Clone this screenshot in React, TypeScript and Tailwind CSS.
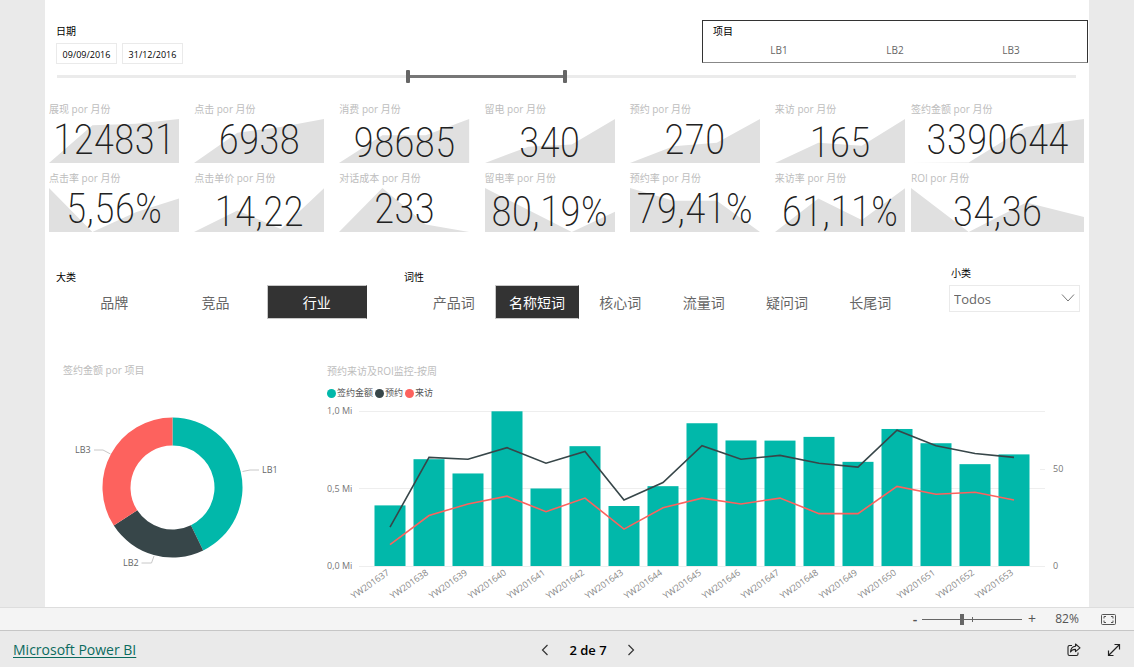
import { useState } from 'react';
import { clsx } from 'clsx';

type Kpi = {
  title: string;
  value: string;
  trend: number[];
  low?: boolean;
};

// trend values go from 0 (bottom) to 1 (top)
const kpiRows: Kpi[][] = [
  [
    { title: '展现 por 月份', value: '124831', trend: [0, 0.86, 0.89, 1] },
    { title: '点击 por 月份', value: '6938', trend: [0, 0.69, 0.82, 1] },
    { title: '消费 por 月份', value: '98685', trend: [0, 0.63, 0.63, 1], low: true },
    { title: '留电 por 月份', value: '340', trend: [0, 0.37, 0.42, 1], low: true },
    { title: '预约 por 月份', value: '270', trend: [0, 0.38, 0.46, 1] },
    { title: '来访 por 月份', value: '165', trend: [0, 0.46, 0.39, 1], low: true },
    { title: '签约金额 por 月份', value: '3390644', trend: [0, 0.01, 0.82, 1] },
  ],
  [
    { title: '点击率 por 月份', value: '5,56%', trend: [1, 0, 0.45, 0.76] },
    { title: '点击单价 por 月份', value: '14,22', trend: [0, 0.49, 0.07, 1], low: true },
    { title: '对话成本 por 月份', value: '233', trend: [0, 1, 0.17, 0] },
    { title: '留电率 por 月份', value: '80,19%', trend: [1, 0.5, 0, 0.46], low: true },
    { title: '预约率 por 月份', value: '79,41%', trend: [1, 0.71, 0.71, 0] },
    { title: '来访率 por 月份', value: '61,11%', trend: [0, 0.76, 0.27, 1], low: true },
    { title: 'ROI por 月份', value: '34,36', trend: [1, 0, 0.67, 0.34], low: true },
  ],
];

const projects = ['LB1', 'LB2', 'LB3'];
const categories = ['品牌', '竞品', '行业'];
const wordTypes = ['产品词', '名称短词', '核心词', '流量词', '疑问词', '长尾词'];

const weeks = [
  { week: 'YW201637', amount: 0.391, booked: 20, visits: 11 },
  { week: 'YW201638', amount: 0.689, booked: 56, visits: 26 },
  { week: 'YW201639', amount: 0.597, booked: 55, visits: 32 },
  { week: 'YW201640', amount: 0.998, booked: 61, visits: 36 },
  { week: 'YW201641', amount: 0.5, booked: 53, visits: 28 },
  { week: 'YW201642', amount: 0.773, booked: 59, visits: 35 },
  { week: 'YW201643', amount: 0.387, booked: 34, visits: 19 },
  { week: 'YW201644', amount: 0.515, booked: 43, visits: 30 },
  { week: 'YW201645', amount: 0.921, booked: 62, visits: 35 },
  { week: 'YW201646', amount: 0.81, booked: 55, visits: 32 },
  { week: 'YW201647', amount: 0.809, booked: 57, visits: 35 },
  { week: 'YW201648', amount: 0.833, booked: 53, visits: 27 },
  { week: 'YW201649', amount: 0.672, booked: 51, visits: 27 },
  { week: 'YW201650', amount: 0.884, booked: 70, visits: 41 },
  { week: 'YW201651', amount: 0.792, booked: 62, visits: 37 },
  { week: 'YW201652', amount: 0.657, booked: 58, visits: 38 },
  { week: 'YW201653', amount: 0.72, booked: 56, visits: 34 },
];

const KpiCard = ({ kpi }: { kpi: Kpi }) => {
  const line = kpi.trend.map((v, i) => `${i * 10},${44 - v * 44}`).join(' ');
  return (
    <div>
      <h3 className="text-[10px] leading-4 text-[#bdbdbd] whitespace-nowrap">{kpi.title}</h3>
      <div className="relative mt-[2px] h-11">
        <svg className="absolute inset-0 w-full h-full" viewBox="0 0 30 44" preserveAspectRatio="none">
          <polygon points={`0,44 ${line} 30,44`} fill="#e0e0e0" />
        </svg>
        <p
          className={clsx(
            "relative text-center font-extralight text-[42px] leading-[41px] text-[#212121] font-['Roboto_Condensed','Open_Sans_Condensed',Roboto,sans-serif]",
            kpi.low && 'pt-[3px]'
          )}
        >
          {kpi.value}
        </p>
      </div>
    </div>
  );
};

const thumb =
  'appearance-none bg-transparent [&::-webkit-slider-thumb]:appearance-none [&::-webkit-slider-thumb]:w-1 [&::-webkit-slider-thumb]:bg-[#666666]';

const DateSlicer = () => {
  const [from, setFrom] = useState(344);
  const [to, setTo] = useState(499);
  const range =
    'absolute inset-0 w-full h-[13px] pointer-events-none [&::-webkit-slider-thumb]:h-[13px] [&::-webkit-slider-thumb]:rounded-[1px] [&::-webkit-slider-thumb]:pointer-events-auto';
  return (
    <div className="relative h-[13px] mt-[6px] ml-3 mr-[13px] flex items-center">
      <div className="w-full h-[3px] bg-[#ebebeb]"></div>
      <div
        className="absolute h-[3px] bg-[#777777]"
        style={{ left: `${from / 10}%`, width: `${(to - from) / 10}%` }}
      ></div>
      <input
        type="range"
        aria-label="Data inicial"
        min={0}
        max={1000}
        value={from}
        onChange={(e) => setFrom(Number(e.target.value))}
        className={clsx(thumb, range)}
      />
      <input
        type="range"
        aria-label="Data final"
        min={0}
        max={1000}
        value={to}
        onChange={(e) => setTo(Number(e.target.value))}
        className={clsx(thumb, range)}
      />
    </div>
  );
};

type ChoiceProps = {
  items: string[];
  selected: string;
  onSelect: (item: string) => void;
  className: string;
};

const Choices = ({ items, selected, onSelect, className }: ChoiceProps) => (
  <div className={clsx('grid ml-2', className)}>
    {items.map((item) => (
      <button
        key={item}
        type="button"
        aria-pressed={item === selected}
        onClick={() => onSelect(item)}
        className={clsx(
          'h-[34px] pt-[2px] text-sm whitespace-nowrap border',
          item === selected
            ? 'bg-[#333333] border-[#c8c8c8] border-r-[#333333] text-white'
            : 'border-transparent text-[#666666]'
        )}
      >
        {item}
      </button>
    ))}
  </div>
);

const polar = (radius: number, deg: number) => {
  const rad = (deg * Math.PI) / 180;
  return `${(109.5 + radius * Math.sin(rad)).toFixed(2)} ${(109.5 - radius * Math.cos(rad)).toFixed(2)}`;
};

const slices = [
  { name: 'LB1', start: 0, end: 154, color: '#01b8aa' },
  { name: 'LB2', start: 154, end: 237, color: '#374649' },
  { name: 'LB3', start: 237, end: 360, color: '#fd625e' },
];

const DonutChart = () => (
  <svg className="w-[240px] h-[220px]" viewBox="0 0 240 220">
    {slices.map((s) => (
      <path
        key={s.name}
        d={`M${polar(70, s.start)} A70 70 0 0 1 ${polar(70, s.end)} L${polar(42, s.end)} A42 42 0 0 0 ${polar(42, s.start)}Z`}
        fill={s.color}
      />
    ))}
    <g fill="none" stroke="#c8c8c8">
      <path d="M179.500 93.500L187 92H196" />
      <path d="M31 72H40L47.500 76" />
      <path d="M78.500 185H88.500L91 178" />
    </g>
    <g className="text-[9px]" fill="#666666">
      <text x="199" y="95">LB1</text>
      <text x="12" y="75">LB3</text>
      <text x="60" y="188">LB2</text>
    </g>
  </svg>
);

const ComboChart = () => {
  const base = 163;
  const center = (i: number) => 63 + i * 39;
  const points = (key: 'booked' | 'visits') =>
    weeks.map((w, i) => `${center(i)},${base - w[key] * 1.94}`).join(' ');
  return (
    <svg className="w-full h-auto" viewBox="0 0 753 202">
      <path d="M32 8.500H718M32 85.500H718M32 163.500H718M713 66.500H718" stroke="#eeeeee" fill="none" />
      {weeks.map((w, i) => (
        <rect
          key={w.week}
          x={center(i) - 15.5}
          y={base - w.amount * 155}
          width="31"
          height={w.amount * 155}
          fill="#01b8aa"
        />
      ))}
      <polyline points={points('booked')} fill="none" stroke="#374649" strokeWidth="1.6" />
      <polyline points={points('visits')} fill="none" stroke="#fd625e" strokeWidth="1.6" />
      <g className="text-[9px]" fill="#777777">
        <text x="0" y="11">1,0 Mi</text>
        <text x="0" y="89">0,5 Mi</text>
        <text x="0" y="166">0,0 Mi</text>
        <text x="726" y="69">50</text>
        <text x="726" y="166">0</text>
      </g>
      <g className="text-[9px]" fill="#888888" textAnchor="end">
        {weeks.map((w, i) => (
          <text key={w.week} transform={`translate(${center(i)} 171) rotate(-35)`}>
            {w.week}
          </text>
        ))}
      </g>
    </svg>
  );
};

const legend = [
  { label: '签约金额', dot: 'bg-[#01b8aa]' },
  { label: '预约', dot: 'bg-[#374649]' },
  { label: '来访', dot: 'bg-[#fd625e]' },
];

const Report = () => {
  const [project, setProject] = useState('');
  const [category, setCategory] = useState('行业');
  const [wordType, setWordType] = useState('名称短词');

  return (
    <main className="flex-1 mx-[45px] pt-5 bg-white">
      <div className="flex justify-between items-start pl-[11px] pr-px">
        <div className="pt-[3px]">
          <p className="text-[10px] leading-4 text-black">日期</p>
          <div className="flex gap-[5px] mt-1">
            {['09/09/2016', '31/12/2016'].map((date) => (
              <input
                key={date}
                type="text"
                aria-label="日期"
                defaultValue={date}
                className="w-[61px] h-[21px] px-1 pt-px text-[9px] text-center text-black border border-[#eaeaea]"
              />
            ))}
          </div>
        </div>
        <div className="w-[386px] h-[43px] pt-[2px] px-[10px] border border-[#333333] border-b-[#888888]">
          <p className="text-[10px] leading-4 text-black">项目</p>
          <div className="grid grid-cols-3 px-2">
            {projects.map((p) => (
              <button
                key={p}
                type="button"
                onClick={() => setProject(p)}
                className={clsx('h-[22px] text-[10px] leading-5 text-[#666666]', p === project && 'font-bold')}
              >
                {p}
              </button>
            ))}
          </div>
        </div>
      </div>

      <DateSlicer />

      <div className="mt-[18px] pl-1 pr-[5px] space-y-[7px]">
        {kpiRows.map((row) => (
          <div key={row[0].title} className="flex gap-[6px]">
            <div className="flex-1 grid grid-cols-6 gap-[15px]">
              {row.slice(0, 6).map((kpi) => (
                <KpiCard key={kpi.title} kpi={kpi} />
              ))}
            </div>
            <div className="w-[173px]">
              <KpiCard kpi={row[6]} />
            </div>
          </div>
        ))}
      </div>

      <div className="mt-[33px] pl-[11px] pr-[9px] grid grid-cols-[311fr_508fr_131fr] gap-[37px]">
        <div className="pt-1">
          <p className="text-[10px] leading-4 text-black">大类</p>
          <Choices items={categories} selected={category} onSelect={setCategory} className="grid-cols-3 gap-px" />
        </div>
        <div className="pt-1">
          <p className="text-[10px] leading-4 text-black">词性</p>
          <Choices items={wordTypes} selected={wordType} onSelect={setWordType} className="grid-cols-6" />
        </div>
        <div>
          <label htmlFor="subcategory" className="block mb-1 pl-[2px] text-[10px] leading-4 text-black">
            小类
          </label>
          <div className="relative">
            <select
              id="subcategory"
              className="w-full h-[27px] pl-1 pt-[2px] appearance-none text-[13px] text-[#666666] border border-[#eaeaea] bg-white"
            >
              <option>Todos</option>
            </select>
            <svg
              className="absolute right-1 top-2 w-4 h-[10px] pointer-events-none"
              viewBox="0 0 16 10"
              fill="none"
              stroke="#777777"
            >
              <path d="M2 1.500L8 8L14 1.500" />
            </svg>
          </div>
        </div>
      </div>

      <div className="mt-[43px] pl-[18px] pr-[9px] flex">
        <section className="w-[264px]">
          <h3 className="text-[10px] leading-4 text-[#bdbdbd]">签约金额 por 项目</h3>
          <DonutChart />
        </section>
        <section className="flex-1 pt-px">
          <h3 className="text-[10px] leading-4 text-[#bdbdbd]">预约来访及ROI监控-按周</h3>
          <ul className="flex gap-[2px] mt-[6px] mb-[2px] text-[9px] leading-4 text-[#555555]">
            {legend.map((item) => (
              <li key={item.label} className="flex items-center gap-px">
                <span className={clsx('w-[9px] h-[9px] rounded-full', item.dot)}></span>
                {item.label}
              </li>
            ))}
          </ul>
          <ComboChart />
        </section>
      </div>
    </main>
  );
};

const ZoomBar = () => {
  const [zoom, setZoom] = useState(40);
  return (
    <div className="h-[23px] pr-[18px] flex items-center justify-end bg-[#f4f4f4] border-t border-[#dddddd] text-[#555555]">
      <button type="button" aria-label="Reduzir" onClick={() => setZoom(zoom - 5)} className="w-[14px] text-sm leading-5 font-semibold">
        -
      </button>
      <div className="relative flex items-center w-[100px] h-[11px]">
        <div className="w-full h-px bg-[#666666]"></div>
        <div className="absolute left-1/2 w-px h-[5px] bg-[#666666]"></div>
        <input
          type="range"
          aria-label="Zoom"
          value={zoom}
          onChange={(e) => setZoom(Number(e.target.value))}
          className={clsx(thumb, 'absolute inset-0 w-full h-[11px] [&::-webkit-slider-thumb]:h-[11px]')}
        />
      </div>
      <button type="button" aria-label="Ampliar" onClick={() => setZoom(zoom + 5)} className="w-5 text-sm leading-5">
        +
      </button>
      <span className="w-[50px] text-center text-xs leading-5">82%</span>
      <button type="button" aria-label="Ajustar à página" className="ml-[9px]">
        <svg className="block w-[15px] h-[11px]" viewBox="0 0 15 11" fill="none" stroke="currentColor">
          <rect x="0.5" y="0.5" width="14" height="10" rx="1" />
          <path d="M5 2.500H3V4.500M10 2.500H12V4.500M5 8.500H3V6.500M10 8.500H12V6.500" />
        </svg>
      </button>
    </div>
  );
};

const Footer = () => (
  <footer className="h-[37px] pt-[2px] px-[13px] grid grid-cols-[521fr_108fr_479fr] items-center border-t border-[#c6c6c6] text-black">
    <a href="#" className="justify-self-start text-sm leading-5 text-[#0b6a5e] underline underline-offset-2">
      Microsoft Power BI
    </a>
    <div className="flex items-center justify-center gap-4">
      <button type="button" aria-label="Página anterior">
        <svg className="block w-2 h-3" viewBox="0 0 8 12" fill="none" stroke="#333333" strokeWidth="1.2">
          <path d="M6.500 1L1.500 6L6.500 11" />
        </svg>
      </button>
      <span className="px-1 text-[13px] leading-5 font-semibold">2 de 7</span>
      <button type="button" aria-label="Próxima página">
        <svg className="block w-2 h-3" viewBox="0 0 8 12" fill="none" stroke="#333333" strokeWidth="1.2">
          <path d="M1.500 1L6.500 6L1.500 11" />
        </svg>
      </button>
    </div>
    <div className="flex items-center justify-end gap-[26px]">
      <button type="button" aria-label="Compartilhar">
        <svg className="block w-[14px] h-[14px]" viewBox="0 0 14 14" fill="none" stroke="#222222" strokeWidth="1.1">
          <path d="M5 2.500H2.500Q1 2.500 1 4V11Q1 12.500 2.500 12.500H9.500Q11 12.500 11 11V9.500" />
          <path d="M8.500 1L13 4.800L8.500 8.600V6.400Q5 6.300 3.500 9Q3.800 3.500 8.500 3.200Z" strokeLinejoin="round" />
        </svg>
      </button>
      <button type="button" aria-label="Tela inteira">
        <svg className="block w-[14px] h-[14px]" viewBox="0 0 14 14" fill="none" stroke="#222222" strokeWidth="1.2">
          <path d="M1.500 12.500L12.500 1.500M7.500 1.500H12.500V6.500M1.500 7.500V12.500H6.500" />
        </svg>
      </button>
    </div>
  </footer>
);

export default function App() {
  return (
    <div className="min-h-screen flex flex-col bg-[#eaeaea] font-['Open_Sans','Noto_Sans_CJK_SC',sans-serif]">
      <Report />
      <ZoomBar />
      <Footer />
    </div>
  );
}
